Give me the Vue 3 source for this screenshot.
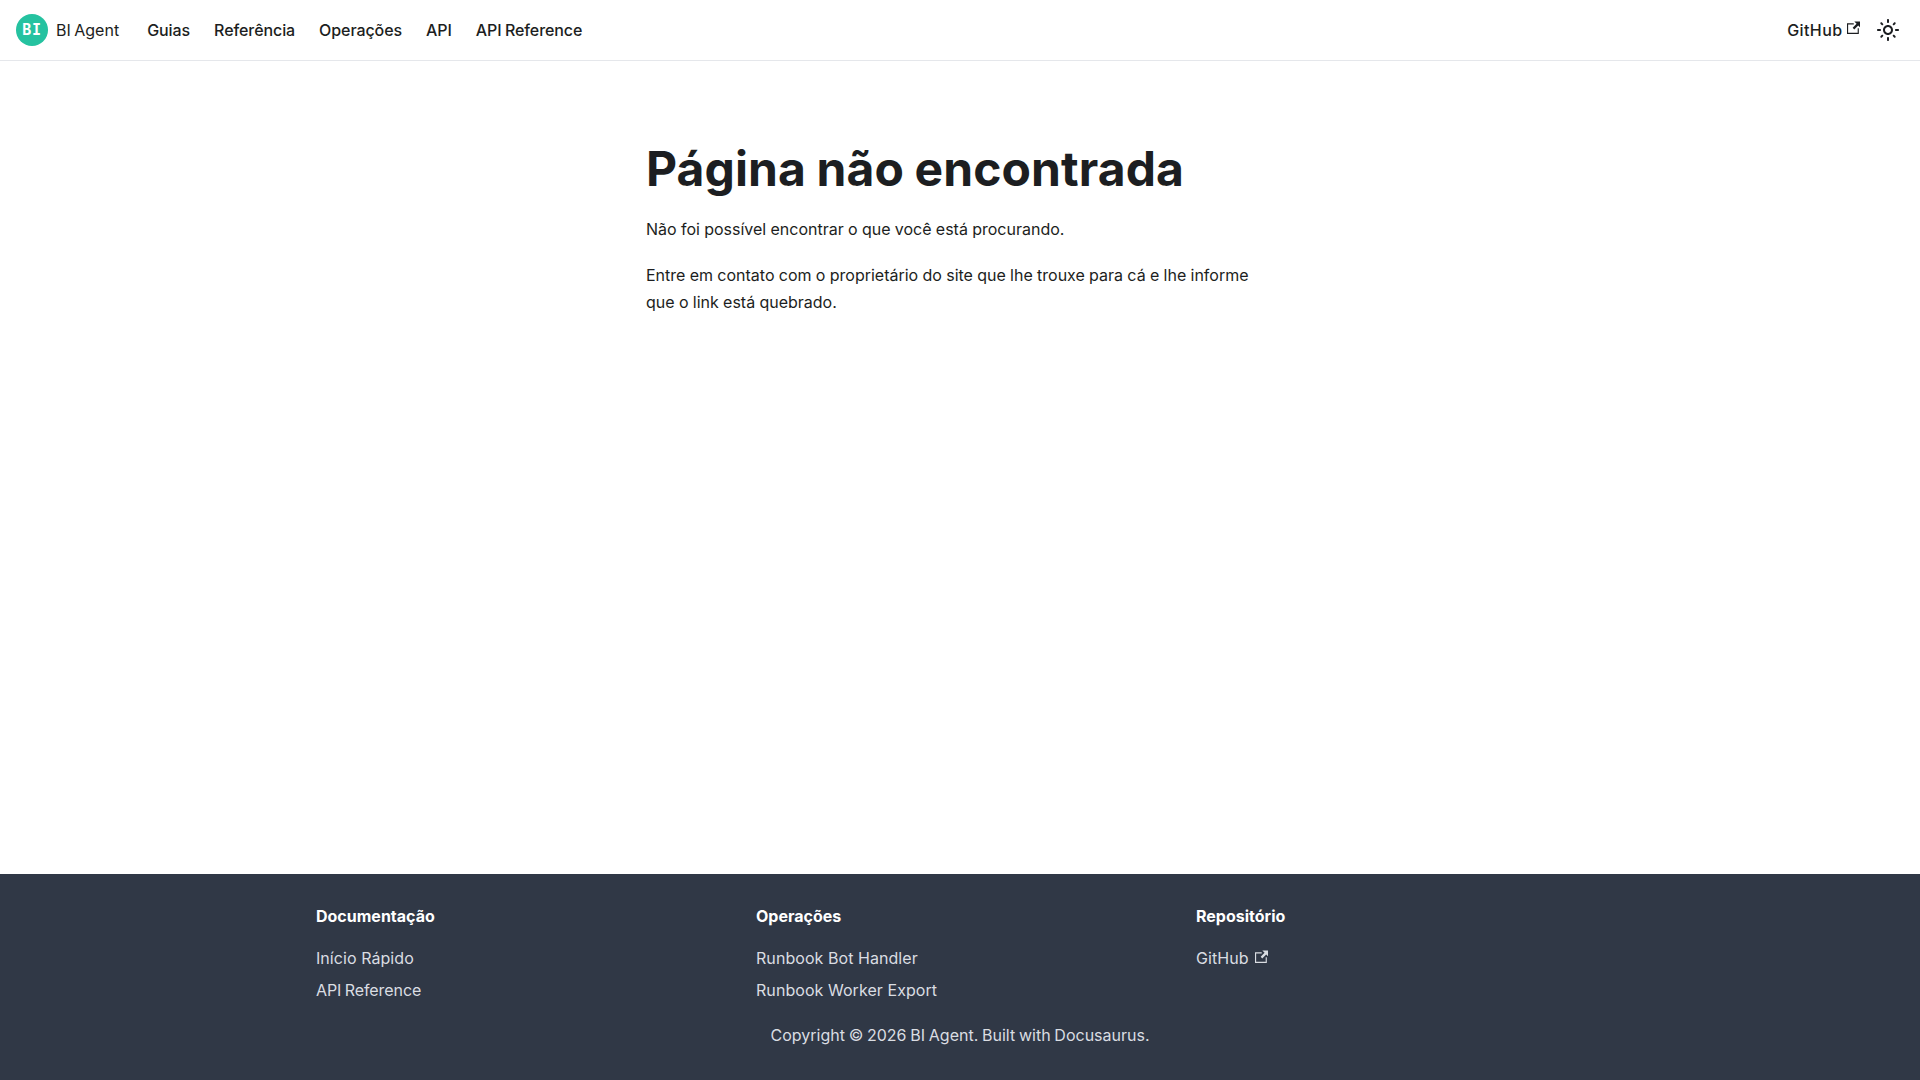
<script setup>
const navLinks = ['Guias', 'Referência', 'Operações', 'API', 'API Reference']

const externalPath =
  'M21 13v10h-21v-19h12v2h-10v15h17v-8h2zm3-12h-10.988l4.035 4-6.977 7.07 2.828 2.828 6.977-7.07 4.125 4.172v-11z'

const footerColumns = [
  { title: 'Documentação', links: [{ label: 'Início Rápido' }, { label: 'API Reference', tight: true }] },
  { title: 'Operações', links: [{ label: 'Runbook Bot Handler' }, { label: 'Runbook Worker Export' }] },
  { title: 'Repositório', links: [{ label: 'GitHub', external: true }] },
]
</script>

<template>
  <div class="page">
    <nav class="navbar">
      <div class="nav-left">
        <a class="brand" href="#">
          <span class="logo">BI</span>
          <span class="brand-title">BI Agent</span>
        </a>
        <a v-for="link in navLinks" :key="link" class="nav-link" href="#">{{ link }}</a>
      </div>
      <div class="nav-right">
        <a class="nav-link github" href="#">
          GitHub
          <svg class="external" viewBox="0 0 24 24" width="13.5" height="13.5" aria-hidden="true">
            <path fill="currentColor" :d="externalPath" />
          </svg>
        </a>
        <button class="theme-toggle" type="button" aria-label="Alternar tema">
          <svg viewBox="0 0 24 24" width="24" height="24" aria-hidden="true">
            <path
              fill="currentColor"
              d="M12,9c1.65,0,3,1.35,3,3s-1.35,3-3,3s-3-1.35-3-3S10.35,9,12,9 M12,7c-2.76,0-5,2.24-5,5s2.24,5,5,5s5-2.24,5-5 S14.76,7,12,7L12,7z M2,13l2,0c0.55,0,1-0.45,1-1s-0.45-1-1-1l-2,0c-0.55,0-1,0.45-1,1S1.45,13,2,13z M20,13l2,0c0.55,0,1-0.45,1-1 s-0.45-1-1-1l-2,0c-0.55,0-1,0.45-1,1S19.45,13,20,13z M11,2v2c0,0.55,0.45,1,1,1s1-0.45,1-1V2c0-0.55-0.45-1-1-1S11,1.45,11,2z M11,20v2c0,0.55,0.45,1,1,1s1-0.45,1-1v-2c0-0.55-0.45-1-1-1C11.45,19,11,19.45,11,20z M5.99,4.58c-0.39-0.39-1.03-0.39-1.41,0 c-0.39,0.39-0.39,1.03,0,1.41l1.06,1.06c0.39,0.39,1.03,0.39,1.41,0s0.39-1.03,0-1.41L5.99,4.58z M18.36,16.95 c-0.39-0.39-1.03-0.39-1.41,0c-0.39,0.39-0.39,1.03,0,1.41l1.06,1.06c0.39,0.39,1.03,0.39,1.41,0c0.39-0.39,0.39-1.03,0-1.41 L18.36,16.95z M19.42,5.99c0.39-0.39,0.39-1.03,0-1.41c-0.39-0.39-1.03-0.39-1.41,0l-1.06,1.06c-0.39,0.39-0.39,1.03,0,1.41 s1.03,0.39,1.41,0L19.42,5.99z M7.05,18.36c0.39-0.39,0.39-1.03,0-1.41c-0.39-0.39-1.03-0.39-1.41,0l-1.06,1.06 c-0.39,0.39-0.39,1.03,0,1.41s1.03,0.39,1.41,0L7.05,18.36z"
            />
          </svg>
        </button>
      </div>
    </nav>

    <main class="main">
      <div class="content">
        <h1>Página não encontrada</h1>
        <p>Não foi possível encontrar o que você está procurando.</p>
        <p>Entre em contato com o proprietário do site que lhe trouxe para cá e lhe informe que o link está quebrado.</p>
      </div>
    </main>

    <footer class="footer">
      <div class="footer-inner">
        <div class="footer-row">
          <div v-for="col in footerColumns" :key="col.title" class="footer-col">
            <div class="footer-title">{{ col.title }}</div>
            <ul>
              <li v-for="link in col.links" :key="link.label">
                <a href="#" :class="{ tight: link.tight }">
                  {{ link.label }}
                  <svg v-if="link.external" class="external" viewBox="0 0 24 24" width="13.5" height="13.5" aria-hidden="true">
                    <path fill="currentColor" :d="externalPath" />
                  </svg>
                </a>
              </li>
            </ul>
          </div>
        </div>
        <div class="copyright">Copyright © 2026 BI Agent. Built with Docusaurus.</div>
      </div>
    </footer>
  </div>
</template>

<style>
html,
body {
  margin: 0;
  background: #ffffff;
}
</style>

<style scoped>
.page {
  display: flex;
  flex-direction: column;
  min-height: 100vh;
  color: #1c1e21;
  font-family: Inter, "Noto Sans", sans-serif;
  font-size: 16px;
  line-height: 1.65;
}

a {
  color: inherit;
  text-decoration: none;
}

.navbar {
  display: flex;
  justify-content: space-between;
  align-items: center;
  box-sizing: border-box;
  height: 61px;
  padding: 8px 16px;
  border-bottom: 1px solid #e5e7eb;
  background: #ffffff;
}

.nav-left,
.nav-right {
  display: flex;
  align-items: center;
}

.brand {
  display: flex;
  align-items: center;
  margin-right: 16px;
}

.logo {
  display: flex;
  align-items: center;
  justify-content: center;
  width: 32px;
  height: 32px;
  margin-right: 8px;
  border-radius: 50%;
  color: #ffffff;
  background: #25c2a0;
  font-family: "DejaVu Sans Mono", monospace;
  font-size: 15px;
  font-weight: 700;
  letter-spacing: 0.8px;
}

.brand-title {
  font-weight: 400;
  word-spacing: -1px;
}

.nav-link {
  display: flex;
  align-items: center;
  padding: 4px 12px;
  font-weight: 500;
  line-height: 1.25;
  letter-spacing: -0.08px;
  word-spacing: -0.8px;
}

.github {
  letter-spacing: 0.4px;
}

.external {
  margin-left: 4px;
  margin-bottom: 4px;
}

.theme-toggle {
  display: flex;
  align-items: center;
  justify-content: center;
  width: 32px;
  height: 32px;
  padding: 0;
  border: 0;
  background: none;
  color: #1c1e21;
}

.main {
  flex: 1 0 auto;
  width: 100%;
  max-width: 1320px;
  box-sizing: border-box;
  margin: 0 auto;
  padding: 78px 16px 80px;
}

.content {
  box-sizing: border-box;
  width: 660px;
  margin-left: 314px;
  padding: 0 16px;
}

h1 {
  margin: 0 0 17px;
  font-size: 48px;
  font-weight: 700;
  line-height: 1.25;
  letter-spacing: 0.1px;
  word-spacing: -1px;
}

p {
  margin: 0 0 20px;
  word-spacing: -0.2px;
}

.footer {
  padding: 32px 16px;
  color: #dadde2;
  background: #303846;
}

.footer-inner {
  max-width: 1288px;
  margin: 0 auto;
}

.footer-row {
  display: grid;
  grid-template-columns: repeat(3, 1fr);
  margin: 0 -16px;
}

.footer-col {
  padding: 0 16px;
  margin-bottom: 16px;
}

.footer-title {
  margin-bottom: 16px;
  color: #ffffff;
  font-weight: 700;
  line-height: 1.25;
}

ul {
  margin: 0;
  padding: 0;
  list-style: none;
}

li a {
  display: block;
  line-height: 2;
  letter-spacing: 0.06px;
}

li a.tight {
  letter-spacing: -0.08px;
  word-spacing: -1px;
}

li a .external {
  margin-left: 1.5px;
  margin-bottom: 0;
}

.copyright {
  text-align: center;
  word-spacing: -0.75px;
}
</style>
